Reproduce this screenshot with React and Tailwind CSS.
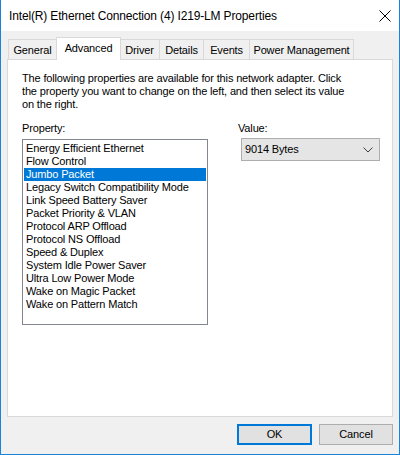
const FONT = { fontFamily: '"Liberation Sans", Arial, sans-serif' }

const properties = [
  'Energy Efficient Ethernet',
  'Flow Control',
  'Jumbo Packet',
  'Legacy Switch Compatibility Mode',
  'Link Speed Battery Saver',
  'Packet Priority & VLAN',
  'Protocol ARP Offload',
  'Protocol NS Offload',
  'Speed & Duplex',
  'System Idle Power Saver',
  'Ultra Low Power Mode',
  'Wake on Magic Packet',
  'Wake on Pattern Match',
]

const tabs = [
  { label: 'General', w: 'w-[49px]' },
  { label: 'Advanced', w: 'w-[65px]', active: true },
  { label: 'Driver', w: 'w-[40px]' },
  { label: 'Details', w: 'w-[44px]' },
  { label: 'Events', w: 'w-[46px]' },
  { label: 'Power Management', w: 'w-[104px]' },
]

function Tab({ label, w, active }) {
  if (active) {
    return (
      <div className={`${w} relative z-10 -mb-px -mx-px h-[23px] pt-[3px] text-center bg-white border border-b-0 border-[#d9d9d9] leading-[14px]`}>
        {label}
      </div>
    )
  }
  return (
    <div className={`${w} h-[20px] pt-[3px] text-center bg-[#f0f0f0] border border-b-0 border-l-0 first:border-l border-[#d9d9d9] leading-[14px]`}>
      {label}
    </div>
  )
}

function Chevron() {
  return (
    <svg width="10" height="6" viewBox="0 0 10 6" className="text-[#404040]">
      <polyline points="0.5,0.5 5,5 9.5,0.5" fill="none" stroke="currentColor" strokeWidth="1" />
    </svg>
  )
}

function CloseIcon() {
  return (
    <svg width="12" height="12" viewBox="0 0 12 12">
      <path d="M0.5 0.5 L11.5 11.5 M11.5 0.5 L0.5 11.5" stroke="#000" strokeWidth="1" />
    </svg>
  )
}

export default function App() {
  return (
    <div style={FONT} className="w-[400px] h-[455px] flex flex-col border-x border-b border-[#1883d7] bg-[#f0f0f0] text-black text-[11px] tracking-[-0.15px]">
      {/* Title bar */}
      <div className="h-[31px] bg-white flex items-center justify-between pl-[8px] pr-[8px]">
        <span className="text-[12px]">Intel(R) Ethernet Connection (4) I219-LM Properties</span>
        <CloseIcon />
      </div>

      {/* Tabs */}
      <div className="flex items-end pl-[7px] mt-[6px]">
        {tabs.map(t => <Tab key={t.label} {...t} />)}
      </div>

      {/* Panel */}
      <div className="mx-[6px] h-[358px] bg-white border border-[#d9d9d9] pl-[14px] pr-[11px] pt-[12px]">
        <p className="leading-[13px] whitespace-nowrap">
          The following properties are available for this network adapter. Click<br />
          the property you want to change on the left, and then select its value<br />
          on the right.
        </p>

        <div className="flex mt-[11px]">
          <div className="w-[186px]">
            <div className="leading-[13px]">Property:</div>
            <div className="mt-[4px] h-[186px] border border-[#828790] p-[1px] pt-[2px]">
              {properties.map(p => (
                <div
                  key={p}
                  className={`h-[13px] leading-[13px] px-[2px] whitespace-nowrap ${p === 'Jumbo Packet' ? 'bg-[#0078d7] text-white' : ''}`}
                >
                  {p}
                </div>
              ))}
            </div>
          </div>

          <div className="ml-[30px]">
            <div className="leading-[13px]">Value:</div>
            <div className="mt-[3px] ml-[3px] w-[139px] h-[23px] bg-[#e5e5e5] border border-[#adadad] flex items-center justify-between pl-[3px] pr-[6px]">
              <span>9014 Bytes</span>
              <Chevron />
            </div>
          </div>
        </div>
      </div>

      {/* Buttons */}
      <div className="flex justify-end gap-[7px] pr-[6px] mt-[7px]">
        <button className="w-[75px] h-[21px] bg-[#e1e1e1] border-2 border-[#0078d7] leading-none">OK</button>
        <button className="w-[74px] h-[21px] bg-[#e1e1e1] border border-[#adadad] leading-none">Cancel</button>
      </div>
    </div>
  )
}
